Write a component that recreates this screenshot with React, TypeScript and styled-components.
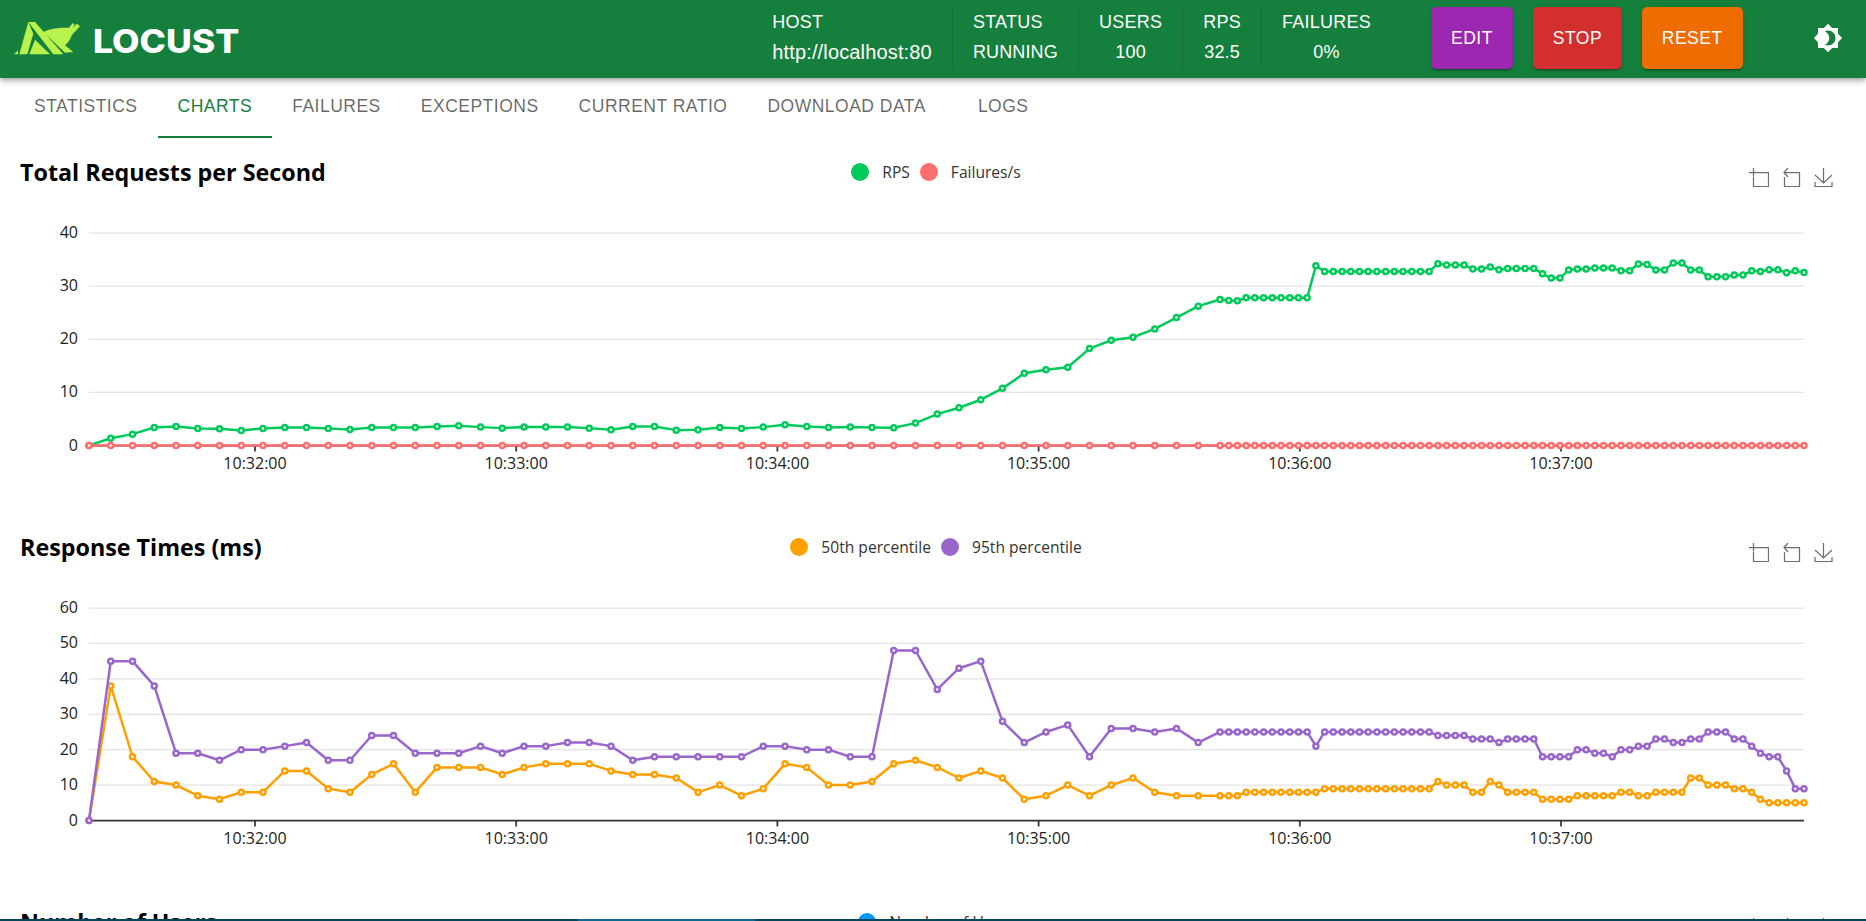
import React from "react";
import styled, { createGlobalStyle } from "styled-components";

const GlobalStyle = createGlobalStyle`
  html, body { margin: 0; padding: 0; height: 100%; overflow: hidden; background: #fff; }
  body { font-family: "Liberation Sans", Arial, sans-serif; }
`;

const Page = styled.div`
  height: 921px;
  overflow: hidden;
`;

const AppBar = styled.header`
  position: relative;
  z-index: 2;
  height: 78px;
  display: flex;
  align-items: center;
  padding: 0 23px 2px 14px;
  box-sizing: border-box;
  background: #15803d;
  color: #fff;
  box-shadow: 0 2px 4px -1px rgba(0, 0, 0, 0.2), 0 4px 5px 0 rgba(0, 0, 0, 0.14), 0 1px 10px 0 rgba(0, 0, 0, 0.12);
`;

const Brand = styled.div`
  display: flex;
  align-items: center;
  gap: 13px;
  flex: 1;
`;

const BrandMark = styled.svg`
  width: 66px;
  height: 33px;
  display: block;
`;

const BrandName = styled.span`
  font-family: Inter, sans-serif;
  font-weight: 800;
  font-size: 32px;
  line-height: 1;
  margin-top: 7px;
  display: inline-block;
  transform: scaleX(1.11);
  transform-origin: left center;
`;

const Stats = styled.div`
  display: flex;
  align-self: stretch;
  align-items: center;
  margin-right: 40px;
`;

const Stat = styled.div<{ $align?: string }>`
  display: flex;
  flex-direction: column;
  align-items: ${(p) => p.$align ?? "center"};
  height: 62px;
  box-sizing: border-box;
  padding: 0 20px;
  border-right: 1px solid rgba(0, 0, 0, 0.12);
  font-size: 18px;
  line-height: 30px;
  &:last-child { border-right: none; }
`;

const StatLabel = styled.span`
  letter-spacing: 0.25px;
`;

const StatValue = styled.span<{ $large?: boolean }>`
  font-size: ${(p) => (p.$large ? "20px" : "18px")};
  letter-spacing: ${(p) => (p.$large ? "0.15px" : "0.15px")};
`;

const Actions = styled.div`
  display: flex;
  gap: 20px;
`;

const ActionButton = styled.button<{ $bg: string; $w: number }>`
  width: ${(p) => p.$w}px;
  height: 62px;
  border: none;
  border-radius: 5px;
  background: ${(p) => p.$bg};
  color: #fff;
  font-family: inherit;
  font-size: 17.5px;
  letter-spacing: 0.5px;
  box-shadow: 0 3px 1px -2px rgba(0, 0, 0, 0.2), 0 2px 2px 0 rgba(0, 0, 0, 0.14), 0 1px 5px 0 rgba(0, 0, 0, 0.12);
`;

const ThemeIcon = styled.svg`
  width: 30px;
  height: 30px;
  margin-left: 70.5px;
  fill: #fff;
  flex: none;
`;

const TabBar = styled.nav`
  height: 60px;
  display: flex;
  padding-left: 14px;
  box-sizing: border-box;
`;

const Tab = styled.div<{ $active?: boolean; $offset?: number }>`
  display: flex;
  align-items: center;
  height: 60px;
  box-sizing: border-box;
  margin-left: ${(p) => p.$offset ?? 0}px;
  padding: 0 20px 1px;
  font-size: 17.5px;
  letter-spacing: 0.5px;
  white-space: nowrap;
  color: ${(p) => (p.$active ? "#15803d" : "rgba(0, 0, 0, 0.6)")};
  border-bottom: 2.5px solid ${(p) => (p.$active ? "#15803d" : "transparent")};
`;

const ChartSection = styled.section`
  height: 375px;
`;

const ChartHeader = styled.div`
  height: 68px;
  display: grid;
  grid-template-columns: 1fr auto 1fr;
  align-items: center;
  padding: 0 32px 0 20px;
`;

const ChartTitle = styled.h2`
  margin: 0;
  font-family: "Open Sans", "Noto Sans", sans-serif;
  font-size: 23.3px;
  font-weight: 700;
  color: #000;
`;

const Legend = styled.div`
  display: flex;
  align-items: center;
  gap: 10px;
  margin-left: 18px;
  margin-top: -1px;
`;

const LegendItem = styled.div`
  display: flex;
  align-items: center;
  gap: 13px;
  font-family: "Open Sans", "Noto Sans", sans-serif;
  font-size: 15.6px;
  color: #333;
`;

const LegendDot = styled.span<{ $color: string }>`
  width: 18px;
  height: 18px;
  border-radius: 50%;
  background: ${(p) => p.$color};
`;

const Toolbox = styled.div`
  justify-self: end;
  display: flex;
  gap: 11px;
  margin-top: 10px;
`;

const ToolIcon = styled.svg`
  width: 20px;
  height: 20px;
  fill: none;
  stroke: #6e6e6e;
  stroke-width: 1.25;
  display: block;
  &:first-child { margin-right: 3px; }
`;

const Plot = styled.svg`
  display: block;
  width: 1866px;
  height: 307px;
`;

const GridLine = styled.line`
  stroke: #e3e3e3;
  stroke-width: 1.25;
`;

const AxisLine = styled.line`
  stroke: #333;
  stroke-width: 1.75;
`;

const AxisText = styled.text`
  font-family: "Open Sans", "Noto Sans", sans-serif;
  font-size: 16px;
  fill: #222;
`;

const SeriesLine = styled.polyline`
  fill: none;
  stroke-width: 2.5;
  stroke-linejoin: round;
`;

const SeriesPoint = styled.circle`
  fill: #fff;
  stroke-width: 2.5;
`;

const ScreenEdge = styled.div`
  position: fixed;
  left: 0;
  right: 0;
  bottom: 0;
  height: 2px;
  display: flex;
  background: #07465a;
`;

const ScreenEdgeGap = styled.div`
  width: 578px;
`;

const ScreenEdgeActive = styled.div`
  width: 177px;
  background: #0e6a92;
`;

/* Pixel geometry of the plots */
const LEFT = 89;
const RIGHT = 1804;
const TOP = 27;
const BOTTOM = 239.5;
const WIDE_STEP = 21.75;
const DENSE_START = LEFT + 52 * WIDE_STEP;
const DENSE_STEP = (RIGHT - DENSE_START) / 67;
const TICKS = ["10:32:00", "10:33:00", "10:34:00", "10:35:00", "10:36:00", "10:37:00"];

const xAt = (i: number) => (i <= 52 ? LEFT + i * WIDE_STEP : DENSE_START + (i - 52) * DENSE_STEP);

const rpsReadings = [
  706, 684, 672, 652, 649, 655, 656, 661, 655, 652, 652, 655, 658, 652, 652, 652, 649, 647, 651, 654, 651, 651, 651,
  654, 659, 649, 649, 660, 659, 652, 655, 651, 644, 649, 652, 651, 652, 653, 639, 612, 593, 569, 535, 490, 479, 472,
  416, 391, 382, 357, 323, 289, 269, 272, 273,
  264, 264, 264, 264, 264, 264, 264, 264,
  168, 185, 185, 185, 185, 185, 185, 185, 185, 185, 185, 185, 185, 185, 162, 166, 166, 166, 178, 178, 172, 180, 176,
  176, 176, 176, 192, 205, 205, 181, 178, 178, 175, 175, 175, 183, 183, 163, 164, 181, 181, 160, 160, 181, 181, 201,
  201, 201, 196, 196, 183, 185, 180, 180, 189, 183, 188,
];
const rps = rpsReadings.map((r) => (706 - r) / 15.9);
const failures = rps.map(() => 0);

const p95 = [
  0, 45, 45, 38, 19, 19, 17, 20, 20, 21, 22, 17, 17, 24, 24, 19, 19, 19, 21, 19, 21, 21, 22, 22, 21, 17, 18, 18, 18, 18,
  18, 21, 21, 20, 20, 18, 18, 48, 48, 37, 43, 45, 28, 22, 25, 27, 18, 26, 26, 25, 26, 22, 25, 25, 25, 25, 25, 25, 25,
  25, 25, 25, 25, 21, 25, 25, 25, 25, 25, 25, 25, 25, 25, 25, 25, 25, 25, 24, 24, 24, 24, 23, 23, 23, 22, 23, 23, 23,
  23, 18, 18, 18, 18, 20, 20, 19, 19, 18, 20, 20, 21, 21, 23, 23, 22, 22, 23, 23, 25, 25, 25, 23, 23, 21, 19, 18, 18,
  14, 9, 9,
];
const p50 = [
  0, 38, 18, 11, 10, 7, 6, 8, 8, 14, 14, 9, 8, 13, 16, 8, 15, 15, 15, 13, 15, 16, 16, 16, 14, 13, 13, 12, 8, 10, 7, 9,
  16, 15, 10, 10, 11, 16, 17, 15, 12, 14, 12, 6, 7, 10, 7, 10, 12, 8, 7, 7, 7, 7, 7, 8, 8, 8, 8, 8, 8, 8, 8, 8, 9, 9,
  9, 9, 9, 9, 9, 9, 9, 9, 9, 9, 9, 11, 10, 10, 10, 8, 8, 11, 10, 8, 8, 8, 8, 6, 6, 6, 6, 7, 7, 7, 7, 7, 8, 8, 7, 7, 8,
  8, 8, 8, 12, 12, 10, 10, 10, 9, 9, 8, 6, 5, 5, 5, 5, 5,
];

type Series = { color: string; values: number[] };

const Chart = ({ max, step, series }: { max: number; step: number; series: Series[] }) => {
  const yAt = (v: number) => BOTTOM - (v / max) * (BOTTOM - TOP);
  const levels: number[] = [];
  for (let v = step; v <= max; v += step) levels.push(v);
  return (
    <Plot viewBox="0 0 1866 307">
      {levels.map((v) => (
        <GridLine key={v} x1={LEFT} x2={RIGHT} y1={yAt(v)} y2={yAt(v)} />
      ))}
      <AxisLine x1={LEFT} x2={RIGHT} y1={BOTTOM} y2={BOTTOM} />
      {TICKS.map((t, i) => (
        <AxisLine key={t} x1={255 + i * 261.2} x2={255 + i * 261.2} y1={BOTTOM} y2={BOTTOM + 6} />
      ))}
      {[0, ...levels].map((v) => (
        <AxisText key={v} x={78} y={yAt(v) + 5} textAnchor="end">
          {v}
        </AxisText>
      ))}
      {TICKS.map((t, i) => (
        <AxisText key={t} x={255 + i * 261.2} y={BOTTOM + 23} textAnchor="middle">
          {t}
        </AxisText>
      ))}
      {series.map((s) => (
        <g key={s.color}>
          <SeriesLine stroke={s.color} points={s.values.map((v, i) => `${xAt(i)},${yAt(v)}`).join(" ")} />
          {s.values.map((v, i) => (
            <SeriesPoint key={i} stroke={s.color} cx={xAt(i)} cy={yAt(v)} r={2.5} />
          ))}
        </g>
      ))}
    </Plot>
  );
};

const Tools = () => (
  <Toolbox>
    <ToolIcon viewBox="0 0 20 20">
      <path d="M0 5.5H8M4.5 1V9.5M8 5.5H19.5V19.5H4.5V10" />
    </ToolIcon>
    <ToolIcon viewBox="0 0 20 20">
      <path d="M5 1L1 5.5L5 10M1 5.5H16.5V19.5H1.5V10" />
    </ToolIcon>
    <ToolIcon viewBox="0 0 20 20">
      <path d="M9.5 1V16M1 8L9.5 16L18 8M1 15V19.5H18V15" />
    </ToolIcon>
  </Toolbox>
);

const ChartHead = ({ title, legend }: { title: string; legend: { label: string; color: string }[] }) => (
  <ChartHeader>
    <ChartTitle>{title}</ChartTitle>
    <Legend>
      {legend.map((l) => (
        <LegendItem key={l.label}>
          <LegendDot $color={l.color} />
          {l.label}
        </LegendItem>
      ))}
    </Legend>
    <Tools />
  </ChartHeader>
);

const stats = [
  { label: "HOST", value: "http://localhost:80", align: "flex-start", large: true },
  { label: "STATUS", value: "RUNNING", align: "flex-start" },
  { label: "USERS", value: "100" },
  { label: "RPS", value: "32.5" },
  { label: "FAILURES", value: "0%" },
];

const tabs = ["Statistics", "Charts", "Failures", "Exceptions", "Current Ratio", "Download Data", "Logs"];

export default function App() {
  return (
    <Page>
      <GlobalStyle />
      <AppBar>
        <Brand>
          <BrandMark viewBox="0 0 66 33">
            <g fill="#b9f24d">
              <path d="M0 32.3L4 28.5V32.3Z" />
              <path d="M14.3 0L19.3 11.7L13.3 32.3H5.3Z" />
              <path d="M21 17.7L36 32.3H15.3Z" />
              <path d="M14.3 0H21L49.3 32.3H39.3Z" />
              <path d="M25.3 11.7C33 7.5 43 5.5 51 5.7H55L58.7 1L60.7 3L58 6.5L63 1.7L66 4.3L57.7 13.3C56.5 17.5 54 21 51 23.3L59.3 30L51 30.7L32.7 13.3Z" />
            </g>
          </BrandMark>
          <BrandName>LOCUST</BrandName>
        </Brand>
        <Stats>
          {stats.map((s) => (
            <Stat key={s.label} $align={s.align}>
              <StatLabel>{s.label}</StatLabel>
              <StatValue $large={s.large}>{s.value}</StatValue>
            </Stat>
          ))}
        </Stats>
        <Actions>
          <ActionButton $bg="#9c27b0" $w={82}>EDIT</ActionButton>
          <ActionButton $bg="#d32f2f" $w={89}>STOP</ActionButton>
          <ActionButton $bg="#ef6c00" $w={100.5}>RESET</ActionButton>
        </Actions>
        <ThemeIcon viewBox="0 0 24 24">
          <path d="M20 8.69V4h-4.69L12 .69 8.69 4H4v4.69L.69 12 4 15.31V20h4.69L12 23.31 15.31 20H20v-4.69L23.31 12 20 8.69zM12 18c-.89 0-1.74-.2-2.5-.55C11.56 16.5 13 14.42 13 12s-1.44-4.5-3.5-5.45C10.26 6.2 11.11 6 12 6c3.31 0 6 2.69 6 6s-2.69 6-6 6z" />
        </ThemeIcon>
      </AppBar>
      <TabBar>
        {tabs.map((t) => (
          <Tab key={t} $active={t === "Charts"} $offset={t === "Logs" ? 12 : 0}>
            {t.toUpperCase()}
          </Tab>
        ))}
      </TabBar>
      <ChartSection>
        <ChartHead
          title="Total Requests per Second"
          legend={[
            { label: "RPS", color: "#00ca5a" },
            { label: "Failures/s", color: "#ff6d6d" },
          ]}
        />
        <Chart
          max={40}
          step={10}
          series={[
            { color: "#00ca5a", values: rps },
            { color: "#ff6d6d", values: failures },
          ]}
        />
      </ChartSection>
      <ChartSection>
        <ChartHead
          title="Response Times (ms)"
          legend={[
            { label: "50th percentile", color: "#ff9f00" },
            { label: "95th percentile", color: "#9966cc" },
          ]}
        />
        <Chart
          max={60}
          step={10}
          series={[
            { color: "#ff9f00", values: p50 },
            { color: "#9966cc", values: p95 },
          ]}
        />
      </ChartSection>
      <ChartSection>
        <ChartHead title="Number of Users" legend={[{ label: "Number of Users", color: "#0099ff" }]} />
      </ChartSection>
      <ScreenEdge>
        <ScreenEdgeGap />
        <ScreenEdgeActive />
      </ScreenEdge>
    </Page>
  );
}
